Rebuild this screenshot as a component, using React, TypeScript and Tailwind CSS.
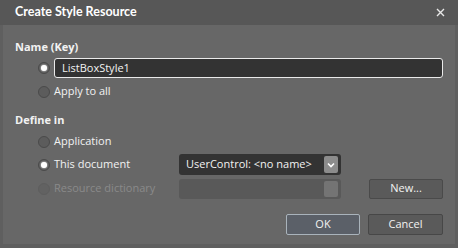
import React from "react";

const font = { fontFamily: '"Open Sans", "Noto Sans", "Liberation Sans", sans-serif' };
const titleFont = { fontFamily: 'Lato, "Open Sans", "Liberation Sans", sans-serif' };

function Radio({ checked, disabled }: { checked?: boolean; disabled?: boolean }) {
  return (
    <div
      className={
        "w-[12px] h-[12px] rounded-full border flex items-center justify-center shrink-0 " +
        (disabled ? "border-[#5e5e5e] bg-[#626262]" : "border-[#4a4a4a] bg-[#5c5c5c]")
      }
    >
      {checked && <div className="w-[6px] h-[6px] rounded-full bg-white shadow-[0_0_2px_#fff]" />}
    </div>
  );
}

function RadioRow({ label, checked, disabled, children }: { label: string; checked?: boolean; disabled?: boolean; children?: React.ReactNode }) {
  return (
    <div className="flex items-center h-[23px] pl-[35px]">
      <Radio checked={checked} disabled={disabled} />
      <span className={"ml-[4px] w-[125px] text-[11px] " + (disabled ? "text-[#8a8a8a]" : "text-[#f2f2f2]")}>{label}</span>
      {children}
    </div>
  );
}

export default function App() {
  return (
    <div style={font} className="w-[458px] h-[248px] bg-[#676767] flex flex-col overflow-hidden">
      <div className="h-[25px] bg-[#575757] flex items-center justify-between pl-[15px] pr-[13px] shrink-0">
        <span style={titleFont} className="text-white font-bold text-[12.5px]">Create Style Resource</span>
        <svg width="9" height="9" viewBox="0 0 9 9" className="text-[#e8e8e8]">
          <path d="M1 1 L8 8 M8 1 L1 8" stroke="currentColor" strokeWidth="1.4" />
        </svg>
      </div>
      <div className="flex-1 flex flex-col border-l-[3px] border-r-[3px] border-b-[4px] border-[#5f5f5f] pl-[12px] pr-[12px]">
        <div className="h-[16px] mt-[14px] flex items-center text-[11px] font-bold text-[#f2f2f2]">Name (Key)</div>
        <div className="flex items-center h-[20px] mt-[3px] pl-[23px]">
          <Radio checked />
          <div className="ml-[4px] flex-1 h-[20px] rounded-[3px] border border-[#eaeaea] bg-[#333333] flex items-center pl-[7px] text-[11px] text-[#f2f2f2]">
            ListBoxStyle1
          </div>
        </div>
        <div className="mt-[2px] -ml-[12px]">
          <RadioRow label="Apply to all" />
        </div>
        <div className="h-[16px] mt-[9px] flex items-center text-[11px] font-bold text-[#f2f2f2]">Define in</div>
        <div className="-ml-[12px] mt-[2px]">
          <RadioRow label="Application" />
          <RadioRow label="This document" checked>
            <div className="w-[162px] h-[21px] rounded-[3px] bg-[#333333] flex items-center justify-between pl-[7px] pr-[3px] text-[11px] text-[#f2f2f2]">
              <span>UserControl: &lt;no name&gt;</span>
              <div className="w-[14px] h-[17px] rounded-[2px] bg-[#8c8c8c] flex items-center justify-center">
                <svg width="8" height="6" viewBox="0 0 8 6">
                  <path d="M1 1.5 L4 4.5 L7 1.5" fill="none" stroke="#ffffff" strokeWidth="1.6" />
                </svg>
              </div>
            </div>
          </RadioRow>
          <div className="mt-[1px]">
            <RadioRow label="Resource dictionary" disabled>
              <div className="w-[162px] h-[20px] rounded-[3px] bg-[#595959] flex items-center justify-end pr-[3px]">
                <div className="w-[14px] h-[16px] rounded-[2px] bg-[#747474]" />
              </div>
              <div className="ml-[28px] w-[74px] h-[20px] rounded-[2px] border border-[#4a4a4a] bg-[#5a5a5a] flex items-center justify-center text-[11px] text-[#f2f2f2]">
                New...
              </div>
            </RadioRow>
          </div>
        </div>
        <div className="flex justify-end gap-[8px] mt-[14px]">
          <div className="w-[74px] h-[21px] rounded-[2px] border border-[#a9b3bb] bg-[#5b6068] flex items-center justify-center text-[11px] text-[#f2f2f2]">
            OK
          </div>
          <div className="w-[75px] h-[21px] rounded-[2px] border border-[#474747] bg-[#5a5a5a] flex items-center justify-center text-[11px] text-[#f2f2f2]">
            Cancel
          </div>
        </div>
      </div>
    </div>
  );
}
